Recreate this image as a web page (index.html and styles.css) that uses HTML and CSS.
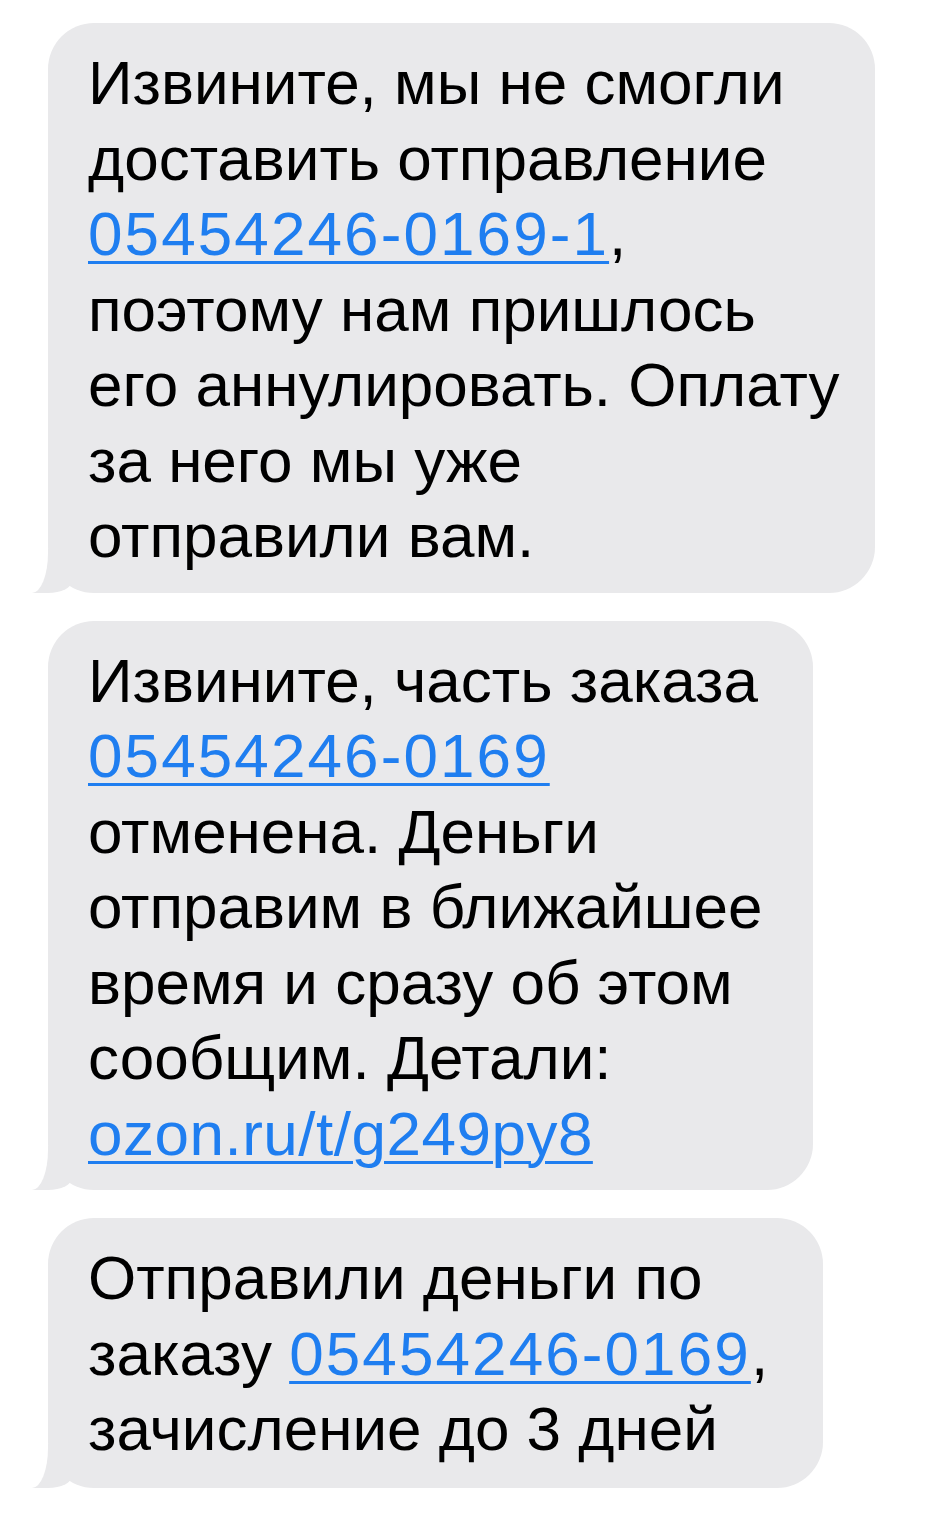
FILE: index.html
```html
<!DOCTYPE html>
<html lang="ru">
  <head>
    <meta charset="UTF-8" />
    <meta name="viewport" content="width=device-width, initial-scale=1.0" />
    <title>Сообщения</title>
    <link rel="stylesheet" href="styles.css">
  </head>
  <body>
    <div class="thread">
      <div class="bubble bubble-first">
        Извините, мы не смогли<br />
        доставить отправление<br />
        <a href="#" class="link order-no">05454246-0169-1</a>,<br />
        поэтому нам пришлось<br />
        его аннулировать. Оплату<br />
        за него мы уже<br />
        отправили вам.
      </div>
      <div class="bubble bubble-second">
        Извините, часть заказа<br />
        <a href="#" class="link order-no">05454246-0169</a><br />
        отменена. Деньги<br />
        отправим в ближайшее<br />
        время и сразу об этом<br />
        сообщим. Детали:<br />
        <a href="#" class="link short-url">ozon.ru/t/g249py8</a>
      </div>
      <div class="bubble bubble-third">
        Отправили деньги по<br />
        заказу <a href="#" class="link order-no">05454246-0169</a>,<br />
        зачисление до 3 дней
      </div>
    </div>
  </body>
</html>
```

FILE: styles.css
```css
body {
  margin: 0;
  background-color: #ffffff;
  font-family: "Liberation Sans", Arial, sans-serif;
}
.thread {
  display: flex;
  flex-direction: column;
  align-items: flex-start;
  gap: 28px;
  padding: 23px 0 0 48px;
}
.bubble {
  position: relative;
  box-sizing: border-box;
  padding: 22px 0 19px 40px;
  background-color: #e9e9eb;
  border-radius: 46px;
  color: #000000;
  font-size: 62px;
  line-height: 75.5px;
  white-space: nowrap;
}
/* tail at the bottom left */
.bubble::before {
  content: "";
  position: absolute;
  left: -16px;
  bottom: 0;
  width: 40px;
  height: 44px;
  background-color: #e9e9eb;
  border-bottom-right-radius: 24px 12px;
}
.bubble::after {
  content: "";
  position: absolute;
  left: -40px;
  bottom: 0;
  width: 40px;
  height: 46px;
  background-color: #ffffff;
  border-bottom-right-radius: 16px 40px;
}
.bubble-first {
  width: 827px;
}
.bubble-second {
  width: 765px;
}
.bubble-third {
  width: 775px;
  padding-bottom: 21px;
}
.link {
  color: #1f7ef0;
  text-decoration: underline;
  text-decoration-thickness: 3px;
  text-underline-offset: 6px;
}
.order-no {
  letter-spacing: 2.1px;
}
.short-url {
  letter-spacing: 0.5px;
}
```
